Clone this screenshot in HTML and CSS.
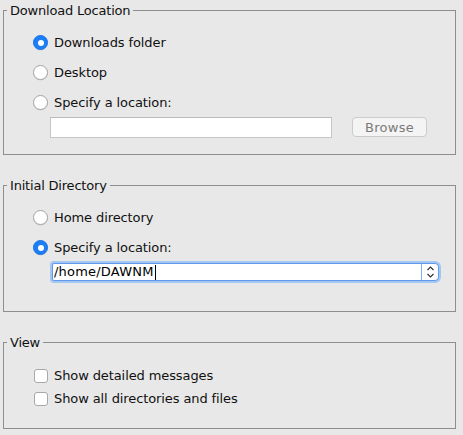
FILE: index.html
```html
<!DOCTYPE html>
<html>
<head>
<meta charset="utf-8">
<link rel="stylesheet" href="styles.css">
</head>
<body>
<div class="panel">
  <fieldset class="group g1">
    <legend>Download Location</legend>
    <div class="opt"><span class="radio on"></span><span>Downloads folder</span></div>
    <div class="opt"><span class="radio"></span><span>Desktop</span></div>
    <div class="opt"><span class="radio"></span><span>Specify a location:</span></div>
    <div class="pathrow">
      <div class="field"></div>
      <div class="btn">Browse</div>
    </div>
  </fieldset>

  <fieldset class="group g2">
    <legend>Initial Directory</legend>
    <div class="opt"><span class="radio"></span><span>Home directory</span></div>
    <div class="opt"><span class="radio on"></span><span>Specify a location:</span></div>
    <div class="combo">
      <div class="combo-text">/home/DAWNM<span class="caret"></span></div>
      <div class="combo-arrow">
        <svg width="9" height="14" viewBox="0 0 9 14"><path d="M1.5 5 L4.5 2 L7.5 5" fill="none" stroke="#333" stroke-width="1.2"/><path d="M1.5 9 L4.5 12 L7.5 9" fill="none" stroke="#333" stroke-width="1.2"/></svg>
      </div>
    </div>
  </fieldset>

  <fieldset class="group g3">
    <legend>View</legend>
    <div class="opt chk"><span class="check"></span><span>Show detailed messages</span></div>
    <div class="opt chk"><span class="check"></span><span>Show all directories and files</span></div>
  </fieldset>
</div>
</body>
</html>
```

FILE: styles.css
```css
html, body {
  margin: 0;
  padding: 0;
  background: #e8e8e8;
}
body {
  font-family: "DejaVu Sans", "Liberation Sans", sans-serif;
  font-size: 13px;
  color: #111;
}
.panel {
  padding: 3px 7px 0 3px;
  display: flex;
  flex-direction: column;
}
.group {
  margin: 0;
  border: 1px solid #8e8e8e;
  padding: 0 0 0 29px;
  display: flex;
  flex-direction: column;
}
.group legend {
  padding: 0 3px;
  margin-left: -26px;
  line-height: 15px;
  height: 15px;
  letter-spacing: -0.2px;
}
.g1 { padding-top: 13px; padding-bottom: 16px; }
.g2 { margin-top: 23px; padding-top: 13px; padding-bottom: 30px; }
.g3 { margin-top: 23px; padding-top: 14px; padding-bottom: 18px; }
.opt {
  display: flex;
  align-items: center;
  height: 23px;
  gap: 6px;
  letter-spacing: -0.1px;
}
.g1 .opt + .opt, .g2 .opt + .opt { margin-top: 7px; }
.radio {
  width: 15px;
  height: 15px;
  box-sizing: border-box;
  border-radius: 50%;
  background: #fff;
  border: 1px solid #a4a4a4;
  box-shadow: 0 0.5px 0.5px rgba(0,0,0,0.1);
  flex: none;
}
.radio.on {
  background: #1b7ef6;
  border-color: #1875e8;
  position: relative;
}
.radio.on::after {
  content: "";
  position: absolute;
  left: 3.5px;
  top: 3.5px;
  width: 6px;
  height: 6px;
  border-radius: 50%;
  background: #fff;
}
.check {
  margin-left: 1px;
  width: 14px;
  height: 14px;
  box-sizing: border-box;
  border-radius: 3px;
  background: #fff;
  border: 1px solid #a8a8a8;
  flex: none;
}
.pathrow {
  display: flex;
  align-items: flex-start;
  margin-top: 3px;
  margin-left: 17px;
  gap: 20px;
}
.field {
  width: 282px;
  height: 21px;
  box-sizing: border-box;
  background: #fff;
  border: 1px solid #c6c6c6;
  border-top-color: #bababa;
}
.btn {
  width: 75px;
  height: 20px;
  box-sizing: border-box;
  border: 1px solid #cbcbcb;
  border-radius: 4px;
  background: #f4f4f4;
  color: #7a7a7a;
  display: flex;
  align-items: center;
  justify-content: center;
  letter-spacing: 0.3px;
}
.combo {
  margin-top: 4px;
  margin-left: 19px;
  width: 387px;
  height: 18px;
  box-sizing: border-box;
  border: 1px solid #5d9ae8;
  box-shadow: 0 0 0 2px #a3c6f2;
  border-radius: 2px 4px 4px 2px;
  background: #fff;
  display: flex;
}
.combo-text {
  flex: 1;
  display: flex;
  align-items: center;
  padding-left: 1px;
  line-height: 16px;
  color: #000;
  letter-spacing: 0.2px;
}
.caret {
  display: inline-block;
  width: 1px;
  height: 15px;
  background: #000;
  margin-left: 1px;
}
.combo-arrow {
  width: 16px;
  border-left: 1px solid #7db0ee;
  display: flex;
  align-items: center;
  justify-content: center;
}
```
